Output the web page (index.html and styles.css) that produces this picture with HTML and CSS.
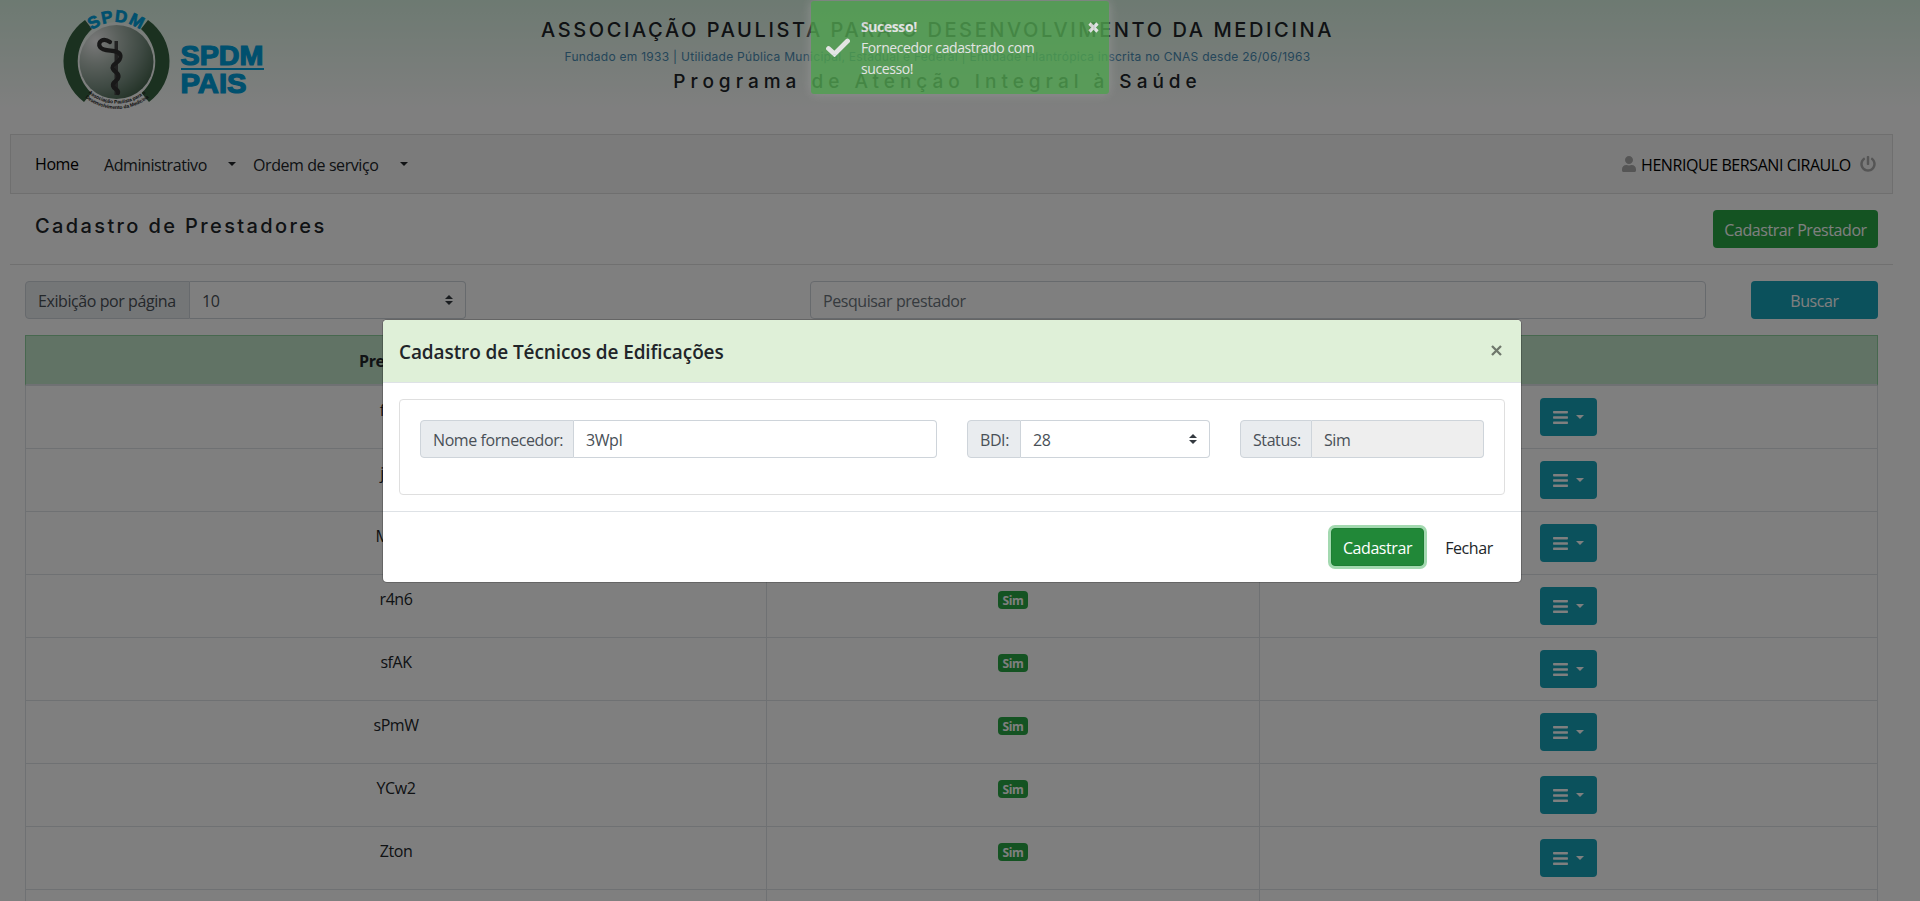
FILE: index.html
```html
<!DOCTYPE html>
<html lang="pt-BR">
<head>
<meta charset="utf-8">
<title>Cadastro de Prestadores</title>
<link rel="stylesheet" href="styles.css">
</head>
<body>
<svg class="defs" width="0" height="0">
  <symbol id="bars" viewBox="0 0 448 512"><path d="M16 132h416c8.800 0 16-7.200 16-16V76c0-8.800-7.200-16-16-16H16C7.200 60 0 67.200 0 76v40c0 8.800 7.200 16 16 16zm0 160h416c8.800 0 16-7.200 16-16v-40c0-8.800-7.200-16-16-16H16c-8.800 0-16 7.200-16 16v40c0 8.800 7.200 16 16 16zm0 160h416c8.800 0 16-7.200 16-16v-40c0-8.800-7.200-16-16-16H16c-8.800 0-16 7.200-16 16v40c0 8.800 7.200 16 16 16z"/></symbol>
  <symbol id="sort" viewBox="0 0 4 5"><path d="M2 0L0 2h4zm0 5L0 3h4z"/></symbol>
</svg>
<div class="page">
  <header class="top">
    <svg class="logo" viewBox="0 0 220 120" width="220" height="120">
      <defs>
        <radialGradient id="ball" cx="0.22" cy="0.22" r="0.9">
          <stop offset="0" stop-color="#f4f4f4"/><stop offset="0.35" stop-color="#b4c0b8"/><stop offset="0.7" stop-color="#7d9386"/><stop offset="1" stop-color="#47664f"/>
        </radialGradient>
        <path id="arcTop" d="M15.500 63a41 41 0 0 1 82 0"/>
        <path id="arcB1" d="M12 58.500a45 45 0 0 0 90 0"/>
        <path id="arcB2" d="M7 59a50 50 0 0 0 100 0"/>
      </defs>
      <circle cx="56.500" cy="62" r="40" fill="#fff" fill-opacity=".55"/>
      <path d="M25 20A50.500 50.500 0 0 0 24 102L31.500 93A43.500 43.500 0 0 1 32 29Z" fill="#366341"/>
      <path d="M88 20A50.500 50.500 0 0 1 89 102L81.500 93A43.500 43.500 0 0 0 81 29Z" fill="#366341"/>
      <circle cx="56.500" cy="62" r="37" fill="url(#ball)"/>
      <path d="M54.500 41h3.500v54h-3.500z" fill="#444"/>
      <path d="M50 42C43 37 37 42 40 47C44 53 60 48 60.500 56C61 64 50 63 53 69C55 73 59 72 58.500 77C58 82 52 81 53 86C54 90 59 89 58 93" fill="none" stroke="#303030" stroke-width="4.200" stroke-linecap="round"/>
      <text class="logo-arc"><textPath href="#arcTop" startOffset="50%" text-anchor="middle">SPDM</textPath></text>
      <text class="logo-fine"><textPath href="#arcB1" startOffset="50%" text-anchor="middle">Associação Paulista para o</textPath></text>
      <text class="logo-fine"><textPath href="#arcB2" startOffset="50%" text-anchor="middle">Desenvolvimento da Medicina</textPath></text>
      <text class="logo-word" x="120.500" y="64.500" textLength="83" lengthAdjust="spacingAndGlyphs">SPDM</text>
      <path d="M121 69h83" stroke="#00a0dc" stroke-width="2"/>
      <text class="logo-word" x="120.500" y="93" textLength="66" lengthAdjust="spacingAndGlyphs">PAIS</text>
    </svg>
    <div class="titles">
      <div class="t1">ASSOCIAÇÃO PAULISTA PARA O DESENVOLVIMENTO DA MEDICINA</div>
      <div class="t2">Fundado em 1933 | Utilidade Pública Municipal, Estadual e Federal | Entidade Filantrópica inscrita no CNAS desde 26/06/1963</div>
      <div class="t3">Programa de Atenção Integral à Saúde</div>
    </div>
  </header>

  <nav class="nav">
    <a class="home">Home</a>
    <a class="adm">Administrativo</a><i class="caret"></i>
    <a class="ord">Ordem de serviço</a><i class="caret"></i>
    <span class="user">
      <svg width="14" height="16" viewBox="0 0 448 512"><path d="M224 256c70.700 0 128-57.300 128-128S294.700 0 224 0 96 57.300 96 128s57.300 128 128 128zm89.600 32h-16.700c-22.200 10.200-46.900 16-72.900 16s-50.600-5.800-72.900-16h-16.700C60.200 288 0 348.200 0 422.400V464c0 26.500 21.500 48 48 48h352c26.500 0 48-21.500 48-48v-41.600c0-74.200-60.200-134.400-134.400-134.400z"/></svg>
      <span class="user-name">HENRIQUE BERSANI CIRAULO</span>
      <svg width="16" height="16" viewBox="0 0 512 512"><path d="M400 54.100c63 45 104 118.600 104 201.900 0 136.800-110.800 247.700-247.500 248C120 504.300 8.200 393 8 256.400 7.900 173.100 48.900 99.300 111.800 54.200c11.700-8.300 28-4.800 35 7.700L162.600 90c5.900 10.500 3.100 23.800-6.600 31-41.500 30.800-68 79.600-68 134.900-.1 92.300 74.500 168.100 168 168.100 91.600 0 168.600-74.200 168-169.100-.3-51.800-24.700-101.800-68.100-134-9.700-7.200-12.400-20.500-6.500-30.900l15.800-28.100c7-12.400 23.200-16.100 34.800-7.800zM296 264V24c0-13.300-10.700-24-24-24h-32c-13.300 0-24 10.700-24 24v240c0 13.300 10.700 24 24 24h32c13.300 0 24-10.700 24-24z"/></svg>
    </span>
  </nav>

  <div class="heading">
    <h1>Cadastro de Prestadores</h1>
    <button class="btn green new">Cadastrar Prestador</button>
  </div>

  <div class="filters">
    <div class="group per-page"><span class="label">Exibição por página</span><span class="control">10<svg width="8" height="10"><use href="#sort"/></svg></span></div>
    <div class="search">Pesquisar prestador</div>
    <button class="btn teal find">Buscar</button>
  </div>

  <table class="list">
    <colgroup><col class="c1"><col class="c2"><col class="c3"></colgroup>
    <thead><tr><th>Prestador</th><th>Ativo</th><th></th></tr></thead>
    <tbody>
      <tr><td>fWpI</td><td><span class="badge">Sim</span></td><td><button class="btn teal menu"><svg width="15" height="17"><use href="#bars"/></svg><i class="caret"></i></button></td></tr>
      <tr><td>jWpI</td><td><span class="badge">Sim</span></td><td><button class="btn teal menu"><svg width="15" height="17"><use href="#bars"/></svg><i class="caret"></i></button></td></tr>
      <tr><td>MaKp</td><td><span class="badge">Sim</span></td><td><button class="btn teal menu"><svg width="15" height="17"><use href="#bars"/></svg><i class="caret"></i></button></td></tr>
      <tr><td>r4n6</td><td><span class="badge">Sim</span></td><td><button class="btn teal menu"><svg width="15" height="17"><use href="#bars"/></svg><i class="caret"></i></button></td></tr>
      <tr><td>sfAK</td><td><span class="badge">Sim</span></td><td><button class="btn teal menu"><svg width="15" height="17"><use href="#bars"/></svg><i class="caret"></i></button></td></tr>
      <tr><td>sPmW</td><td><span class="badge">Sim</span></td><td><button class="btn teal menu"><svg width="15" height="17"><use href="#bars"/></svg><i class="caret"></i></button></td></tr>
      <tr><td>YCw2</td><td><span class="badge">Sim</span></td><td><button class="btn teal menu"><svg width="15" height="17"><use href="#bars"/></svg><i class="caret"></i></button></td></tr>
      <tr><td>Zton</td><td><span class="badge">Sim</span></td><td><button class="btn teal menu"><svg width="15" height="17"><use href="#bars"/></svg><i class="caret"></i></button></td></tr>
      <tr class="last"><td></td><td></td><td></td></tr>
    </tbody>
  </table>
</div>

<div class="backdrop">
  <section class="modal">
    <div class="modal-head"><h5>Cadastro de Técnicos de Edificações</h5><span class="close"><svg width="11" height="11" viewBox="0 0 11 11"><path d="M1 1l9 9M10 1l-9 9"/></svg></span></div>
    <div class="modal-body">
      <div class="card">
        <div class="group nome"><span class="label">Nome fornecedor:</span><span class="control">3WpI</span></div>
        <div class="group bdi"><span class="label">BDI:</span><span class="control">28<svg width="8" height="10"><use href="#sort"/></svg></span></div>
        <div class="group status"><span class="label">Status:</span><span class="control">Sim</span></div>
      </div>
    </div>
    <div class="modal-foot"><button class="btn save">Cadastrar</button><button class="btn plain">Fechar</button></div>
  </section>
</div>

<aside class="toast">
  <svg class="check" width="24" height="19" viewBox="0 0 24 19"><path d="M2.500 10.500l6 5.500L21.500 3" /></svg>
  <div class="toast-text"><b>Sucesso!</b><br>Fornecedor cadastrado com<br>sucesso!</div>
  <svg class="toast-x" width="11" height="11" viewBox="0 0 11 11"><path d="M1.500 1.500l8 8M9.500 1.500l-8 8"/></svg>
</aside>
</body>
</html>
```
FILE: styles.css
```css
* { box-sizing: border-box; }
body {
  margin: 0;
  height: 901px;
  overflow: hidden;
  background: #fff;
  color: #212529;
  font: 16px/24px "Open Sans", "Noto Sans", sans-serif;
  letter-spacing: -0.42px;
}
.defs { position: absolute; }
.page { height: 901px; overflow: hidden; }

.top {
  display: flex;
  height: 134px;
  background: linear-gradient(#dbf4e4 0, #fff 110px);
}
.logo { margin-left: 60px; flex: none; }
.logo-arc { font: 900 17px "Liberation Sans", sans-serif; fill: #00a0dc; stroke: #00a0dc; stroke-width: .7; letter-spacing: 1px; }
.logo-fine { font: 700 5px "Liberation Sans", sans-serif; fill: #222; letter-spacing: -0.1px; }
.logo-word { font: 900 27px "Liberation Sans", sans-serif; fill: #00a0dc; stroke: #00a0dc; stroke-width: 1.2; letter-spacing: 0; }
.titles {
  flex: 1;
  display: flex;
  flex-direction: column;
  align-items: center;
  padding-top: 15px;
  margin-right: 325px;
  white-space: nowrap;
  font-family: Inter, "Open Sans", sans-serif;
  color: #212529;
}
.t1 { font-size: 20px; line-height: 30px; font-weight: 450; letter-spacing: 2.6px; }
.t2 { font-size: 12px; line-height: 24px; color: #4a8cb4; letter-spacing: 0.27px; }
.t3 { font-size: 19px; line-height: 26px; font-weight: 450; letter-spacing: 5px; }

.nav {
  display: flex;
  align-items: center;
  width: 1883px;
  height: 60px;
  margin-left: 10px;
  padding: 0 16px 0 24px;
  background: #f7f7f7;
  border: 1px solid #dfdfdf;
  white-space: nowrap;
}
.home { width: 69px; color: #000; margin-top: -1px; }
.adm { width: 124px; margin-top: 1px; color: #212529; }
.ord { width: 147px; margin: 1px 0 0 17px; }
.caret { border: 4.500px solid transparent; border-top-color: #212529; border-bottom: 0; flex: none; }
.user { margin-left: auto; display: flex; align-items: center; }
.user svg { fill: #aaa; }
.user-name { width: 210px; margin: 1px 9px 0 5px; color: #000; }

.heading {
  display: flex;
  justify-content: space-between;
  width: 1883px;
  height: 71px;
  margin-left: 10px;
  padding: 16px 15px 0 25px;
  border-bottom: 1px solid #e0e0e0;
}
h1 { margin: 2px 0 0; font: 500 20px/28px Inter, "Open Sans", sans-serif; letter-spacing: 2.38px; }
.btn {
  height: 38px;
  padding: 1px 0 0;
  border: 0;
  border-radius: 4px;
  color: #fff;
  font: inherit;
  letter-spacing: inherit;
  text-align: center;
}
.green { background: #28a745; }
.teal { background: #17a2b8; }
.new { width: 165px; }

.filters { display: flex; padding: 16px 0 0 25px; }
.group { display: flex; height: 38px; }
.label {
  padding: 7px 0 0 12px;
  border: 1px solid #ced4da;
  border-radius: 4px 0 0 4px;
  background: #e9ecef;
  color: #495057;
  white-space: nowrap;
}
.control {
  flex: 1;
  display: flex;
  justify-content: space-between;
  align-items: center;
  padding: 1px 12px 0;
  border: 1px solid #ced4da;
  border-left: 0;
  border-radius: 0 4px 4px 0;
  background: #fff;
  color: #495057;
}
.control svg { fill: #343a40; margin-top: -1px; }
.per-page { width: 441px; }
.per-page .label { width: 165px; }
.search {
  width: 896px;
  margin-left: 344px;
  padding: 7px 12px 0;
  border: 1px solid #ced4da;
  border-radius: 4px;
  color: #6c757d;
}
.find { width: 127px; margin-left: 45px; }

.list {
  width: 1853px;
  margin: 16px 0 0 25px;
  table-layout: fixed;
  border-collapse: separate;
  border-spacing: 0;
  text-align: center;
}
.c1 { width: 742px; }
.c2 { width: 493px; }
th {
  height: 51px;
  padding: 2px 0 0;
  background: #c3e6cb;
  border-top: 1px solid #8fd19e;
  border-bottom: 2px solid #dee2e6;
  color: #212529;
}
th:first-child { border-left: 1px solid #8fd19e; }
th:last-child { border-right: 1px solid #8fd19e; }
td {
  height: 63px;
  padding: 12px 0;
  vertical-align: top;
  border-right: 1px solid #dee2e6;
  border-bottom: 1px solid #dee2e6;
}
td:first-child { border-left: 1px solid #dee2e6; }
.badge {
  display: block;
  width: 30px;
  height: 18px;
  margin: 4px auto 0;
  border-radius: 4px;
  background: #28a745;
  color: #fff;
  font: 700 12px/19px "Open Sans", sans-serif;
}
.menu {
  display: flex;
  align-items: center;
  width: 57px;
  margin: 0 auto;
  padding: 0 0 0 13px;
}
.menu svg { fill: #fff; }
.menu .caret { margin-left: 8px; border-top-color: #fff; }

.backdrop {
  position: absolute;
  inset: 0;
  padding: 319px 0 0 382px;
  background: rgba(0, 0, 0, .5);
}
.modal {
  width: 1140px;
  height: 264px;
  background: #fff;
  background-clip: padding-box;
  border: 1px solid rgba(0, 0, 0, .2);
  border-radius: 5px;
}
.modal-head {
  display: flex;
  justify-content: space-between;
  height: 63px;
  padding: 17px 19px 0 16px;
  border-bottom: 1px solid #dee2e6;
  border-radius: 4px 4px 0 0;
  background: #dff0d8;
}
h5 { margin: 0; font-size: 19px; line-height: 30px; font-weight: 550; letter-spacing: -0.1px; }
.close { padding-top: 8px; }
.close svg, .toast svg { display: block; fill: none; }
.close path { stroke: #6f786c; stroke-width: 2.300; }
.modal-body { padding: 16px; height: 128px; }
.card {
  display: flex;
  height: 96px;
  padding: 20px;
  border: 1px solid #dfdfdf;
  border-radius: 4px;
}
.nome { width: 517px; }
.nome .label { width: 154px; }
.bdi { width: 243px; margin-left: 30px; }
.bdi .label { width: 54px; }
.status { width: 244px; margin-left: 30px; }
.status .label { width: 72px; }
.status .control { background: #eee; }
.modal-foot {
  display: flex;
  justify-content: flex-end;
  height: 71px;
  padding: 16px 16px 0;
  border-top: 1px solid #dee2e6;
}
.save {
  width: 93px;
  background: #218838;
  border: 1px solid #1e7e34;
  box-shadow: 0 0 0 3px #a3d9b0;
}
.plain { width: 72px; margin-left: 9px; background: none; color: #212529; }

.toast {
  position: absolute;
  left: 811px;
  top: 1px;
  width: 298px;
  height: 93px;
  display: flex;
  padding: 15px 10px 0 15px;
  border-radius: 3px;
  background: #51a351;
  box-shadow: 0 0 12px #999;
  opacity: .8;
  color: #fff;
  font-size: 14px;
  line-height: 21px;
  letter-spacing: -0.4px;
  white-space: nowrap;
}
.check { margin-top: 22px; }
.check path { stroke: #fff; stroke-width: 4.800; stroke-linecap: round; }
.toast-text { flex: 1; margin-left: 11px; }
.toast-x { margin-top: 6px; }
.toast-x path { stroke: #fff; stroke-width: 3.200; }
```
